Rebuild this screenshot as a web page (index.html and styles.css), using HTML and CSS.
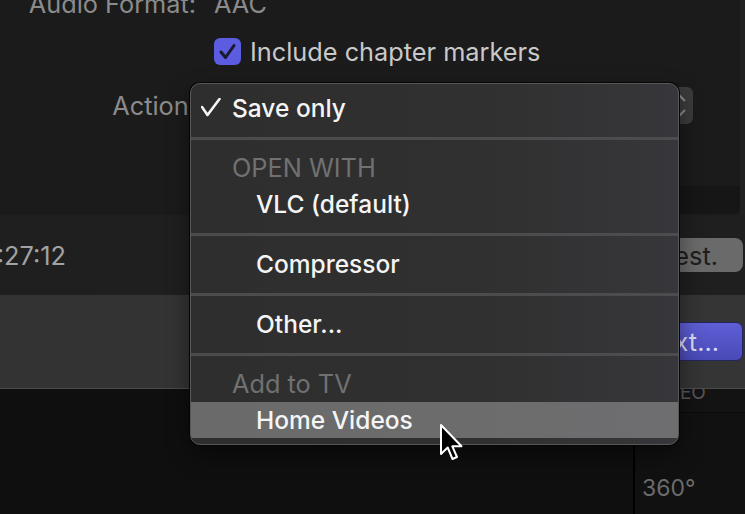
FILE: index.html
```html
<!DOCTYPE html>
<html>
<head>
<meta charset="utf-8">
<link rel="stylesheet" href="styles.css">
</head>
<body>
<div class="screen">
  <section class="top">
    <div class="form">
      <div class="row r1"><span class="label">Audio Format:</span><span class="value">AAC</span></div>
      <div class="row r2"><span class="label"></span>
        <span class="check">
          <span class="box"><svg width="27" height="27" viewBox="0 0 27 27"><polyline points="7,14 11.5,19.5 20,7.5" fill="none" stroke="#1a1a2e" stroke-width="3" stroke-linecap="round" stroke-linejoin="round"/></svg></span>
          <span class="check-text">Include chapter markers</span>
        </span>
      </div>
      <div class="row r3"><span class="label">Action:</span>
        <div class="popup"><span class="stepper"><svg width="16" height="37" viewBox="0 0 16 37"><polyline points="-2,14 3,9 8,14" fill="none" stroke="#8a8a8a" stroke-width="2"/><polyline points="-2,23 3,28 8,23" fill="none" stroke="#8a8a8a" stroke-width="2"/></svg></span></div>
      </div>
      <div class="row r4"><span class="label"></span><div class="field"></div></div>
    </div>
    <div class="edge"></div>
  </section>
  <section class="band1">
    <div class="time"><span>00:00:27:12</span></div>
    <button class="btn grey">Change Dest.</button>
  </section>
  <section class="band2">
    <button class="btn primary">Next...</button>
  </section>
  <section class="bottom">
    <div class="canvas"></div>
    <div class="side">
      <div class="side-head"><span>VIDEO</span></div>
      <div class="side-body">360°</div>
    </div>
  </section>

  <div class="menu">
    <div class="sec first">
      <div class="item checked">
        <svg class="tick" width="20" height="20" viewBox="0 0 20 20"><polyline points="1,9 6.5,17 18.5,1" fill="none" stroke="#f4f4f4" stroke-width="2.6" stroke-linecap="round" stroke-linejoin="round"/></svg>
        <span>Save only</span>
      </div>
    </div>
    <div class="sep"></div>
    <div class="sec">
      <div class="item head">OPEN WITH</div>
      <div class="item sub">VLC (default)</div>
    </div>
    <div class="sep"></div>
    <div class="sec">
      <div class="item sub">Compressor</div>
    </div>
    <div class="sep"></div>
    <div class="sec">
      <div class="item sub">Other...</div>
    </div>
    <div class="sep"></div>
    <div class="sec last">
      <div class="item head">Add to TV</div>
      <div class="item sub hl">Home Videos</div>
    </div>
  </div>

  <svg class="cursor" width="28" height="42" viewBox="0 0 28 42">
    <path d="M2 2 L2 31 L8.7 24.5 L13.5 36 L18 34 L13.3 23.3 L22.5 23.3 Z" fill="#000" stroke="#fff" stroke-width="2" stroke-linejoin="round"/>
  </svg>
</div>
</body>
</html>
```
FILE: styles.css
```css
* { box-sizing: border-box; }
html, body { margin: 0; padding: 0; background: #1b1b1b; }
body { font-family: Inter, "Noto Sans", "DejaVu Sans", sans-serif; }

.screen {
  position: relative;
  width: 745px;
  height: 514px;
  overflow: hidden;
  background: #1b1b1b;
}

/* top form area */
.top {
  display: flex;
  height: 215px;
  background: #1b1b1b;
}
.form {
  flex: 1;
  display: flex;
  flex-direction: column;
}
.edge { width: 5px; background: #212121; }

.row {
  display: flex;
  align-items: center;
  font-size: 25.3px;
  white-space: nowrap;
}
.label {
  width: 196px;
  flex: none;
  text-align: right;
  color: #8b8b8b;
  margin-right: 18px;
}
.r1 { height: 30px; margin-top: -12px; }
.r1 .value { color: #8b8b8b; }
.r2 { height: 30px; margin-top: 18px; }
.r3 { height: 37px; margin-top: 21px; }
.r4 { height: 28px; margin-top: 62px; }

.check { display: flex; align-items: center; gap: 9px; }
.box {
  width: 27px; height: 27px;
  border-radius: 6px;
  background: #5b5ce0;
  display: flex;
}
.check-text { color: #c9c9c9; }

.popup {
  width: 479px;
  height: 37px;
  border-radius: 6px;
  background: #3b3b3b;
  display: flex;
  justify-content: flex-end;
}
.stepper { width: 16px; height: 37px; display: flex; }

.field {
  margin-left: auto;
  width: 180px;
  height: 28px;
  border-radius: 0 0 7px 7px;
  background: #161616;
}

/* band 1 */
.band1 {
  height: 80px;
  background: #1f1f1f;
  display: flex;
  align-items: center;
  justify-content: space-between;
}
.time {
  width: 66px;
  overflow: hidden;
  display: flex;
  justify-content: flex-end;
  white-space: nowrap;
  font-size: 25.3px;
  color: #a2a2a2;
}
.btn {
  font-family: Inter, "Noto Sans", sans-serif;
  font-size: 25.3px;
  border: none;
  margin: 0 2px 0 0;
  white-space: nowrap;
}
.btn.grey {
  height: 34px;
  border-radius: 8px;
  background: #6a6a6a;
  color: #1d1d1d;
  padding: 0 25px 0 40px;
}

/* band 2 */
.band2 {
  height: 93px;
  background: linear-gradient(90deg, #333 0%, #353535 100%);
  display: flex;
  align-items: center;
  justify-content: flex-end;
}
.btn.primary {
  height: 39px;
  border-radius: 7px;
  background: linear-gradient(#5f5fd6, #4949b6);
  border: 1px solid #25255f;
  color: #dadaf4;
  padding: 0 23px 0 40px;
}

/* bottom */
.bottom {
  height: 126px;
  border-top: 1px solid #4c4c4c;
  display: flex;
  background: #0f0f0f;
}
.canvas { width: 633px; background: #0f0f0f; }
.side {
  flex: 1;
  border-left: 2px solid #000;
  background: #111;
  display: flex;
  flex-direction: column;
}
.side-head {
  height: 24px;
  overflow: hidden;
  background: #131313;
  border-bottom: 1px solid #0a0a0a;
  padding-left: 13px;
  font-size: 19px;
  line-height: 20px;
  color: #575757;
}
.side-head span { display: block; margin-top: -6px; }
.side-body {
  padding: 61px 0 0 7px;
  font-size: 23px;
  color: #6b6b6b;
}

/* menu overlay */
.menu {
  position: absolute;
  left: 190px;
  top: 83px;
  width: 489px;
  height: 362px;
  border: 1px solid #585858;
  border-radius: 10px;
  background: linear-gradient(90deg, #2e2e2e 0%, #303030 60%, #37373b 100%);
  box-shadow: 0 0 0 1px #050505, 0 10px 24px rgba(0,0,0,0.45);
  overflow: hidden;
  display: flex;
  flex-direction: column;
}
.sec { padding: 10px 0 11px; }
.sec.first { padding: 6px 0 11px; }
.sec.last { padding: 10px 0 0; flex: 1; }
.sep { height: 3px; background: #4c4c4e; flex: none; }
.item {
  height: 36px;
  line-height: 36px;
  font-size: 24.5px;
  font-weight: 500;
  color: #f5f5f5;
  white-space: nowrap;
}
.item.checked {
  display: flex;
  align-items: center;
  padding-left: 10px;
  gap: 11px;
}
.tick { flex: none; }
.item.head { padding-left: 41px; color: #717171; font-weight: 400; font-size: 25.3px; }
.item.sub { padding-left: 65px; }
.item.hl { background: linear-gradient(90deg, #6a6a6a, #6e6e70); }

.cursor {
  position: absolute;
  left: 439px;
  top: 423px;
}
```
